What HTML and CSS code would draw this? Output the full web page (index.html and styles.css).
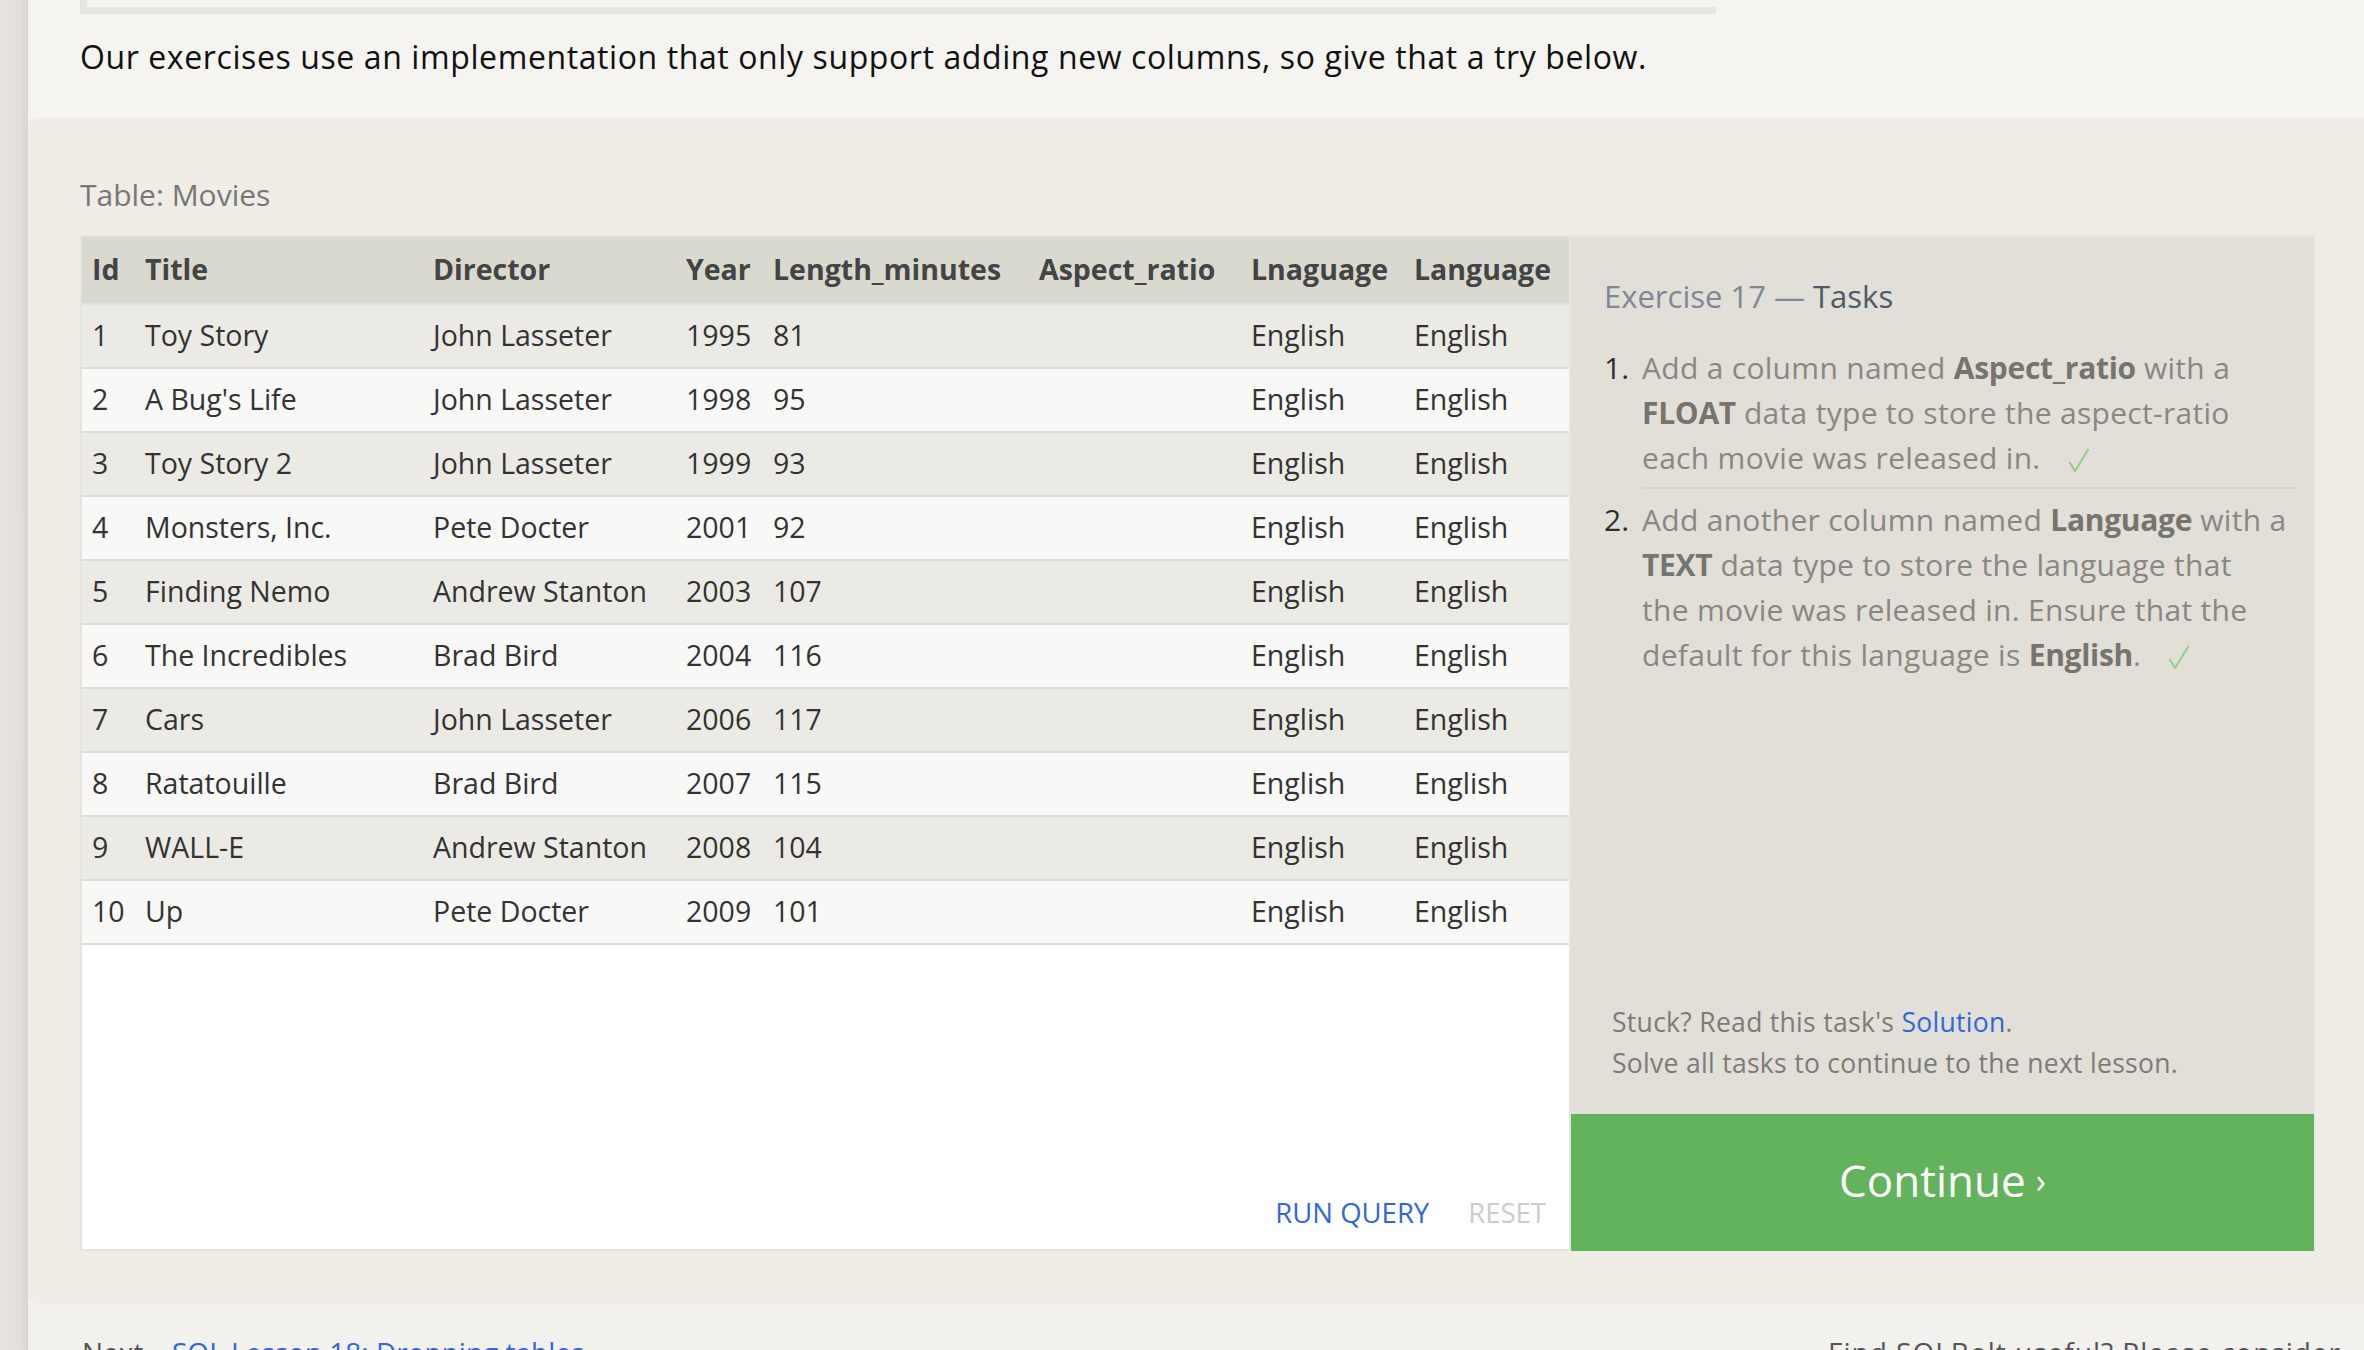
FILE: index.html
```html
<!DOCTYPE html>
<html lang="en">
<head>
<meta charset="utf-8">
<title>SQL Lesson 17: Altering tables</title>
<link rel="stylesheet" href="styles.css">
</head>
<body>
<div class="page">
  <div class="strip"></div>
  <main class="main">
    <div class="prev-box"></div>
    <p class="intro">Our exercises use an implementation that only support adding new columns, so give that a try below.</p>
    <section class="exercise">
      <div class="table-label">Table: Movies</div>
      <div class="workspace">
        <div class="results">
          <table class="movies">
            <colgroup>
              <col class="c-id"><col class="c-title"><col class="c-dir"><col class="c-year"><col class="c-len"><col class="c-asp"><col class="c-lna"><col class="c-lang">
            </colgroup>
            <thead>
              <tr><th>Id</th><th>Title</th><th>Director</th><th>Year</th><th>Length_minutes</th><th>Aspect_ratio</th><th>Lnaguage</th><th>Language</th></tr>
            </thead>
            <tbody>
              <tr><td>1</td><td>Toy Story</td><td>John Lasseter</td><td>1995</td><td>81</td><td></td><td>English</td><td>English</td></tr>
              <tr><td>2</td><td>A Bug's Life</td><td>John Lasseter</td><td>1998</td><td>95</td><td></td><td>English</td><td>English</td></tr>
              <tr><td>3</td><td>Toy Story 2</td><td>John Lasseter</td><td>1999</td><td>93</td><td></td><td>English</td><td>English</td></tr>
              <tr><td>4</td><td>Monsters, Inc.</td><td>Pete Docter</td><td>2001</td><td>92</td><td></td><td>English</td><td>English</td></tr>
              <tr><td>5</td><td>Finding Nemo</td><td>Andrew Stanton</td><td>2003</td><td>107</td><td></td><td>English</td><td>English</td></tr>
              <tr><td>6</td><td>The Incredibles</td><td>Brad Bird</td><td>2004</td><td>116</td><td></td><td>English</td><td>English</td></tr>
              <tr><td>7</td><td>Cars</td><td>John Lasseter</td><td>2006</td><td>117</td><td></td><td>English</td><td>English</td></tr>
              <tr><td>8</td><td>Ratatouille</td><td>Brad Bird</td><td>2007</td><td>115</td><td></td><td>English</td><td>English</td></tr>
              <tr><td>9</td><td>WALL-E</td><td>Andrew Stanton</td><td>2008</td><td>104</td><td></td><td>English</td><td>English</td></tr>
              <tr><td>10</td><td>Up</td><td>Pete Docter</td><td>2009</td><td>101</td><td></td><td>English</td><td>English</td></tr>
            </tbody>
          </table>
          <div class="actions">
            <span class="run">RUN QUERY</span>
            <span class="reset">RESET</span>
          </div>
        </div>
        <aside class="tasks">
          <h2 class="tasks-title"><span class="ex">Exercise 17 —</span> <span class="t">Tasks</span></h2>
          <ol class="task-list">
            <li class="task first">
              <span class="num">1.</span>
              <div class="task-body">Add a column named <b>Aspect_ratio</b> with a<br><b>FLOAT</b> data type to store the aspect-ratio<br>each movie was released in.<svg class="check" width="22" height="24" viewBox="0 0 22 24"><polyline points="1.5,14 7,23 20.5,1" fill="none" stroke="#8fd08c" stroke-width="2"/></svg></div>
            </li>
            <li class="task second">
              <span class="num">2.</span>
              <div class="task-body">Add another column named <b>Language</b> with a<br><b>TEXT</b> data type to store the language that<br>the movie was released in. Ensure that the<br>default for this language is <b>English</b>.<svg class="check" width="22" height="24" viewBox="0 0 22 24"><polyline points="1.5,14 7,23 20.5,1" fill="none" stroke="#8fd08c" stroke-width="2"/></svg></div>
            </li>
          </ol>
          <div class="stuck">Stuck? Read this task's <a class="link">Solution</a>.<br>Solve all tasks to continue to the next lesson.</div>
          <div class="continue">Continue <span class="chev">›</span></div>
        </aside>
      </div>
    </section>
    <footer class="footer">
      <div class="next">Next – <a class="link">SQL Lesson 18: Dropping tables</a></div>
      <div class="donate">Find SQLBolt useful? Please consider donating (via Paypal) to support our work in the future.</div>
    </footer>
  </main>
</div>
</body>
</html>
```

FILE: styles.css
```css
* { box-sizing: border-box; }

html, body {
  margin: 0;
  padding: 0;
  height: 1350px;
  overflow: hidden;
  background: #f5f4f0;
  font-family: "Open Sans", "Noto Sans", sans-serif;
}

.page {
  display: flex;
  height: 1350px;
}

.strip {
  width: 28px;
  flex: none;
  background: linear-gradient(to right, #e7e4e0 0%, #e3e0dc 70%, #d8d5d1 100%);
}

.main {
  flex: 1;
  min-width: 0;
  background: #f5f4f0;
}

.prev-box {
  margin-left: 52px;
  width: 1636px;
  height: 14px;
  border-left: 7px solid #e6e5df;
  border-bottom: 7px solid #e6e5df;
}

.intro {
  margin: 21px 0 39px 52px;
  font-size: 32px;
  letter-spacing: 0.6px;
  line-height: 44px;
  color: #111;
}

.exercise {
  background: #efede6;
  border-radius: 8px 0 0 8px;
  padding: 57px 0 53px 52px;
}

.table-label {
  font-size: 30px;
  line-height: 40px;
  color: #777;
  margin-bottom: 20px;
}

.workspace {
  width: 2235px;
  height: 1016px;
  display: flex;
  border-top: 2px solid #e5e4de;
  border-left: 2px solid #e5e4de;
  border-right: 2px solid #e5e4de;
}

.results {
  width: 1489px;
  flex: none;
  background: #fff;
  border-right: 2px solid #e5e4de;
  border-bottom: 2px solid #e5e4de;
  display: flex;
  flex-direction: column;
}

.movies {
  width: 1487px;
  table-layout: fixed;
  border-collapse: collapse;
  font-size: 28.5px;
  color: #333;
}

.c-id { width: 53px; }
.c-title { width: 288px; }
.c-dir { width: 253px; }
.c-year { width: 87px; }
.c-len { width: 266px; }
.c-asp { width: 212px; }
.c-lna { width: 163px; }
.c-lang { width: 165px; }

.movies th {
  background: #d9d9d0;
  color: #444;
  font-weight: 700;
  text-align: left;
  height: 67px;
  padding: 0 0 2px 10px;
  border-bottom: 2px solid #e3e2dc;
  white-space: nowrap;
  vertical-align: middle;
}

.movies td {
  height: 64px;
  padding: 0 0 3px 10px;
  border-bottom: 2px solid #dedcd6;
  white-space: nowrap;
  vertical-align: middle;
}

.movies tbody tr:nth-child(odd) td { background: #ebeae4; }
.movies tbody tr:nth-child(even) td { background: #f8f8f7; }

.actions {
  margin-top: auto;
  display: flex;
  justify-content: flex-end;
  gap: 39px;
  padding: 0 23px 16px 0;
  font-size: 27.5px;
  line-height: 40px;
}

.run { color: #3168d6; }
.reset { color: #cccccc; }

.tasks {
  flex: 1;
  background: #e1dfd8;
  display: flex;
  flex-direction: column;
  padding: 37px 0 0 0;
}

.tasks-title {
  margin: 0 0 0 33px;
  font-size: 31px;
  line-height: 44px;
  font-weight: 400;
}

.tasks-title .ex { color: #7f8896; }
.tasks-title .t { color: #4f5a6a; }

.task-list {
  list-style: none;
  margin: 27px 16px 0 33px;
  padding: 0;
}

.task {
  display: flex;
  font-size: 30px;
  letter-spacing: 0.3px;
  line-height: 45px;
}

.task.second {
  padding-top: 8px;
}

.num {
  width: 38px;
  flex: none;
  color: #2e2e2e;
  letter-spacing: 0;
}

.task-body {
  flex: 1;
  color: #8a8782;
  white-space: nowrap;
}

.task-body b {
  color: #76746e;
  font-weight: 700;
  letter-spacing: -0.3px;
}

.task.first .task-body {
  padding-bottom: 7px;
  border-bottom: 2px solid #d6d4cc;
}

.check {
  margin-left: 27px;
  vertical-align: -3px;
}

.stuck {
  margin: auto 0 30px 41px;
  font-size: 26.5px;
  letter-spacing: 0.3px;
  line-height: 41px;
  color: #7d7b77;
}

.link { color: #3168d6; text-decoration: none; }

.continue {
  height: 137px;
  margin-right: -1px;
  padding-bottom: 5px;
  background: #62b35b;
  color: #fff;
  font-size: 44px;
  font-weight: 500;
  display: flex;
  align-items: center;
  justify-content: center;
}

.chev {
  margin-left: 10px;
  font-size: 34px;
}

.footer {
  background: #f2f1ed;
  display: flex;
  padding: 28px 0 0 54px;
  font-size: 28px;
  line-height: 40px;
  color: #555;
}

.next { width: 1746px; flex: none; }

.donate { width: 560px; flex: none; letter-spacing: 1px; }
```
